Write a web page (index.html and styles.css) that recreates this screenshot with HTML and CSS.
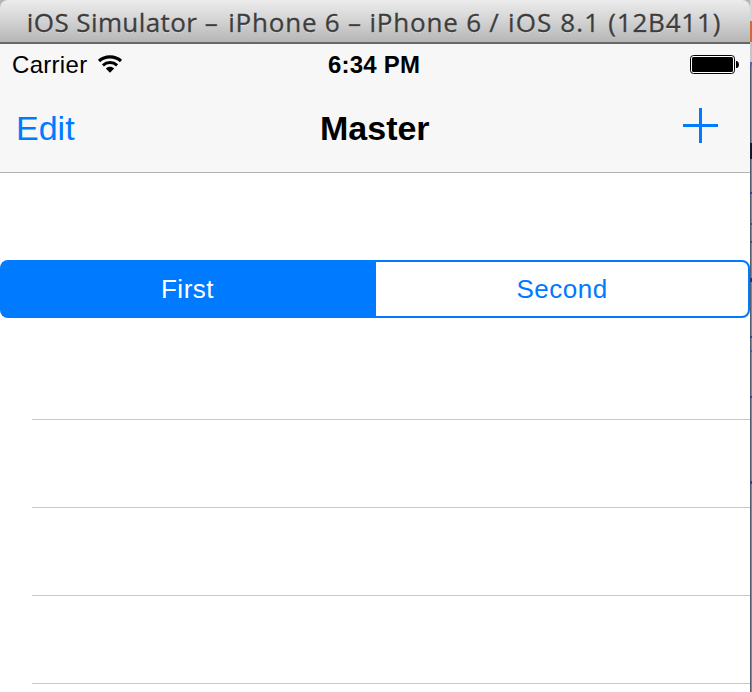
FILE: index.html
```html
<!DOCTYPE html>
<html lang="en">
<head>
<meta charset="utf-8">
<title>iOS Simulator</title>
<link rel="stylesheet" href="styles.css">
</head>
<body>
<div class="desktop">
  <main class="window">
    <header class="titlebar"><span class="window-title"><span class="app-name">iOS Simulator</span> <span class="dash">–</span> iPhone 6 – iPhone 6 <span class="version">/ iOS 8.1 </span>(12B411)</span></header>
    <section class="top">
      <div class="status">
        <div class="carrier">
          <span>Carrier</span>
          <svg class="wifi" width="26" height="18" viewBox="0 0 26 18">
            <path d="M2 6C8 .5 18 .5 24 6" fill="none" stroke="#000" stroke-width="3.2"/>
            <path d="M5.9 10.3C10 6.7 16 6.7 20.1 10.3" fill="none" stroke="#000" stroke-width="3"/>
            <path d="M8.8 13.5C11.2 11.3 14.8 11.3 17.2 13.5L13 17.8Z"/>
          </svg>
        </div>
        <span class="time">6:34 PM</span>
        <svg class="battery" width="49" height="19" viewBox="0 0 49 19">
          <rect x=".5" y=".5" width="44" height="18" rx="3" fill="#fff" stroke="#000"/>
          <rect x="2" y="2" width="41" height="15" rx="1.5"/>
          <path d="M46 6H47Q49 7 49 9.5T47 13H46Z"/>
        </svg>
      </div>
      <nav class="navbar">
        <span class="edit">Edit</span>
        <span class="heading">Master</span>
        <svg class="add" width="35" height="35" viewBox="0 0 35 35"><path d="M0 16h35v3H0zM16 0h3v35h-3z" fill="#007aff"/></svg>
      </nav>
    </section>
    <section class="table">
      <div class="segments">
        <div class="segment selected">First</div>
        <div class="segment">Second</div>
      </div>
      <div class="row short"></div>
      <div class="row"></div>
      <div class="row"></div>
      <div class="row"></div>
    </section>
  </main>
  <aside class="backdrop"></aside>
</div>
</body>
</html>
```

FILE: styles.css
```css
* { box-sizing: border-box; }
body {
  margin: 0;
  font-family: "Liberation Sans", Arial, sans-serif;
  color: #000;
}
.desktop {
  display: flex;
  width: 752px;
  height: 692px;
  overflow: hidden;
  background: linear-gradient(#b4b4b4 0 62px, #6c7788 62px);
}
.window { width: 750px; height: 692px; }
.titlebar {
  height: 44px;
  padding-right: 2px;
  display: flex;
  justify-content: center;
  background: linear-gradient(#ececec, #d8d8d8 40%, #b6b6b6);
  border-bottom: 2px solid #686868;
  border-radius: 8px 8px 0 0;
}
.window-title {
  font: 26px/44px "Open Sans", sans-serif;
  color: #3d3d3d;
  white-space: nowrap;
  letter-spacing: 0.8px;
  text-shadow: 0 1px 0 rgba(255, 255, 255, 0.4);
  -webkit-text-stroke: 0.3px #3d3d3d;
}
.app-name { letter-spacing: 0.4px; }
.dash { letter-spacing: 2.8px; }
.version { letter-spacing: 1.15px; }
.top {
  height: 129px;
  background: #f7f7f7;
  border-bottom: 1px solid #b2b2b2;
}
.status {
  height: 40px;
  padding: 0 11px 0 12px;
  display: grid;
  grid-template-columns: 316px 1fr auto;
  align-items: center;
  font-size: 24px;
  line-height: 42px;
}
.carrier { display: flex; align-items: center; gap: 10px; letter-spacing: 0.3px; }
.time { font-weight: bold; letter-spacing: 0.2px; }
.wifi, .battery { margin-bottom: 2px; }
.navbar {
  height: 88px;
  padding: 0 32px 0 16px;
  display: grid;
  grid-template-columns: 304px 1fr auto;
  font-size: 34px;
  line-height: 88px;
}
.edit { color: #007aff; }
.heading { font-weight: bold; }
.add { margin-top: 24px; }
.table { height: 519px; padding-top: 87px; background: #fff; overflow: hidden; }
.segments {
  height: 58px;
  display: grid;
  grid-template-columns: 374px 1fr;
  border: 2px solid #007aff;
  border-radius: 8px;
  font-size: 26px;
  line-height: 54px;
  text-align: center;
  letter-spacing: 0.5px;
  color: #007aff;
}
.selected { padding-right: 3px; background: #007aff; color: #fff; }
.row { height: 88px; margin-left: 32px; border-bottom: 1px solid #c8c7cc; }
.short { height: 102px; }
.backdrop {
  width: 2px;
  background:
    linear-gradient(#d3d3d3, #d3d3d3) 0 0 / 2px 21px,
    linear-gradient(#d2683f, #d2683f) 0 21px / 2px 21px,
    linear-gradient(#c4c4c4, #c4c4c4) 0 42px / 2px 20px,
    linear-gradient(#4968b8, #4968b8) 0 62px / 2px 3px,
    linear-gradient(#111b2b, #111b2b) 0 143px / 2px 16px,
    linear-gradient(#2544a4, #2544a4) 0 192px / 2px 2px,
    linear-gradient(#4a5364, #4a5364) 0 223px / 2px 2px,
    linear-gradient(#4a5364, #4a5364) 0 241px / 2px 2px,
    linear-gradient(#253678, #253678) 0 278px / 2px 4px,
    linear-gradient(#2544a4, #2544a4) 0 336px / 2px 2px,
    linear-gradient(#445ea0, #445ea0) 0 350px / 2px 2px,
    linear-gradient(#2544a4, #2544a4) 0 396px / 2px 2px,
    linear-gradient(#2544a4, #2544a4) 0 481px / 2px 3px,
    linear-gradient(90deg, #515c6d 50%, #7b8997 50%);
  background-repeat: no-repeat;
}
```
